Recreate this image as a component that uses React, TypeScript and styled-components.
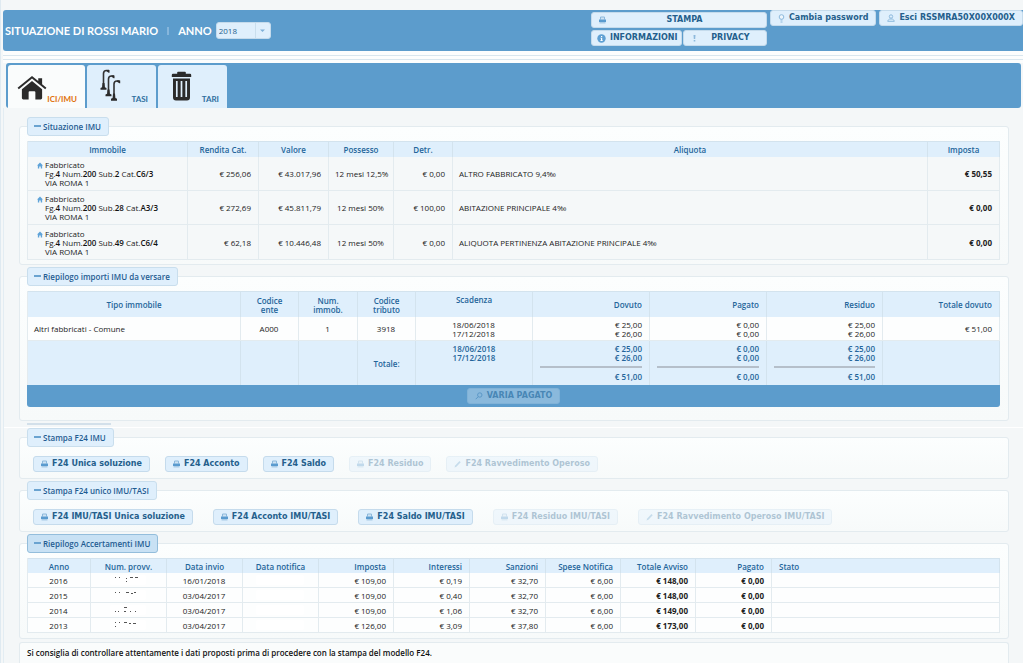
import React from "react";
import styled, { createGlobalStyle } from "styled-components";

const uiFont = '"Open Sans", "Trebuchet MS", sans-serif';
const titleFont = '"Lato", "Trebuchet MS", sans-serif';
const buttonFont = '"DejaVu Sans", Verdana, sans-serif';

const blue = "#5c9ccc";
const pale = "#dfeffc";
const line = "#e3ebef";
const ink = "#2e6e9e";

const Global = createGlobalStyle`
  *, *::before, *::after { box-sizing: border-box; }
  body { margin: 0; background: #ffffff; font-family: ${uiFont}; font-size: 8px; line-height: 9px; color: #222222; }
  b { font-weight: 600; color: #111111; }
  svg { display: block; flex: none; }
`;

const Page = styled.div`
  background: #f4f7f8;
  border-left: 1px solid #dfeaf1;
  padding: 10px 0 0 2px;
`;

const Header = styled.header`
  display: flex;
  align-items: flex-start;
  justify-content: space-between;
  height: 41px;
  background: ${blue};
  border-radius: 3px 0 0 3px;
`;

const TitleBar = styled.div`
  display: flex;
  align-items: center;
  height: 41px;
  padding-left: 2px;
  font-family: ${titleFont};
`;

const Title = styled.h1`
  margin: 0;
  font-size: 11px;
  line-height: 16px;
  font-weight: 700;
  color: #ffffff;
`;

const TitleDivider = styled.span`
  width: 2px;
  height: 8px;
  margin: 0 9px;
  background: #86b6dc;
`;

const YearLabel = styled.label`
  font-size: 11px;
  line-height: 16px;
  font-weight: 700;
  color: #ffffff;
  margin-right: 4px;
`;

const YearBox = styled.div`
  display: grid;
  width: 55px;
  height: 17px;
  background: ${pale};
  border: 1px solid #c5dbec;
  border-radius: 3px;

  & > * { grid-area: 1 / 1; }
  & > svg { justify-self: end; pointer-events: none; }
`;

const YearSelect = styled.select`
  appearance: none;
  width: 100%;
  height: 15px;
  padding: 0 16px 0 2px;
  border: 0;
  background: transparent;
  font-family: ${uiFont};
  font-size: 8px;
  color: #255f8c;
`;

const Actions = styled.div`
  display: flex;
  align-items: flex-start;
  gap: 3px;
`;

const ActionGrid = styled.div`
  display: grid;
  grid-template-columns: 91px 84px;
  gap: 2px 1px;
  padding-top: 2px;
`;

const Button = styled.button<{ $wide?: boolean; $centered?: boolean }>`
  display: flex;
  align-items: center;
  gap: 4px;
  height: 16px;
  padding: 0 7px;
  grid-column: ${(p) => (p.$wide ? "span 2" : "auto")};
  border: 1px solid #c5dbec;
  border-radius: 3px;
  background: ${pale};
  color: #255f8c;
  font-family: ${buttonFont};
  font-size: 8px;
  line-height: 10px;
  font-weight: 700;
  white-space: nowrap;

  & > span { flex: ${(p) => (p.$centered ? "1" : "none")}; text-align: center; }
  &:disabled { opacity: 0.35; }
`;

const InfoButton = styled(Button)`
  padding: 0 0 0 5px;
`;

const Rules = styled.div`
  height: 12px;
  padding-top: 4px;
  background: #fcfdfd;

  &::after { content: ""; display: block; height: 5px; border: solid #d9e6ee; border-width: 1px 0; }
`;

const Tabs = styled.nav`
  display: flex;
  align-items: flex-end;
  gap: 2px;
  height: 45px;
  margin: 0 2px 0 3px;
  padding-left: 2px;
  background: ${blue};
  border-radius: 3px;
`;

const Tab = styled.a<{ $active?: boolean }>`
  display: flex;
  align-items: flex-end;
  justify-content: space-between;
  width: ${(p) => (p.$active ? "77px" : "69px")};
  height: 43px;
  padding: 0 8px 4px ${(p) => (p.$active ? "9px" : "13px")};
  border-radius: 3px 3px 0 0;
  background: ${(p) => (p.$active ? "#fafcfc" : pale)};
  color: ${(p) => (p.$active ? "#e17009" : ink)};
  font-family: ${titleFont};
  font-size: 8px;
  line-height: 10px;
  font-weight: 700;
  text-decoration: none;

  & > svg { margin-bottom: 3px; }
`;

const Content = styled.main`
  border-left: 1px solid #e3edf3;
  padding: 9px 14px 0 15px;
`;

const Section = styled.fieldset<{ $bottom: number }>`
  min-width: 0;
  margin: 0 0 2px;
  padding: 5px 8px ${(p) => p.$bottom}px 7px;
  border: 1px solid ${line};
  border-radius: 3px;
  background: linear-gradient(#fcfefe, #f7fafa);
`;

const Legend = styled.legend<{ $focused?: boolean }>`
  display: flex;
  align-items: center;
  gap: 2px;
  height: 19px;
  padding: 0 7px 1px 6px;
  border: 1px solid ${(p) => (p.$focused ? "#93bddb" : "#c9deed")};
  border-radius: 3px;
  background: ${(p) => (p.$focused ? "#c8e1f4" : pale)};
  color: #1f5c92;
  font-size: 8px;
  font-weight: 600;
`;

const Dash = styled.span`
  width: 7px;
  height: 2px;
  background: #6aa3d0;
`;

const Table = styled.table`
  width: 100%;
  table-layout: fixed;
  border-collapse: separate;
  border-spacing: 0;
  border-left: 1px solid ${line};
  font-size: 8px;
`;

const Th = styled.th<{ $align?: string; $top?: boolean; $h: number }>`
  height: ${(p) => p.$h}px;
  padding: ${(p) => (p.$top ? "3px 7px" : "0 7px")};
  border: solid #d3e3ee;
  border-width: 1px 1px 0 0;
  background: ${pale};
  color: #24659a;
  font-weight: 600;
  text-align: ${(p) => p.$align || "center"};
  vertical-align: ${(p) => (p.$top ? "top" : "middle")};
  white-space: nowrap;
`;

const Td = styled.td<{ $align?: string; $bold?: boolean; $h: number; $white?: boolean }>`
  height: ${(p) => p.$h}px;
  padding: 0 7px 0 6px;
  border: solid ${line};
  border-width: 0 1px 1px 0;
  background: ${(p) => (p.$white ? "#fdfefe" : "#f5f8f9")};
  text-align: ${(p) => p.$align || "left"};
  font-weight: ${(p) => (p.$bold ? 700 : 400)};
  white-space: nowrap;
`;

const TotalTd = styled.td<{ $align?: string; $top?: boolean }>`
  height: 44px;
  padding: ${(p) => (p.$top ? "3px 7px 0" : "0 7px")};
  border-right: 1px solid #d3e3ee;
  background: ${pale};
  color: #24659a;
  font-weight: 600;
  text-align: ${(p) => p.$align || "center"};
  vertical-align: ${(p) => (p.$top ? "top" : "middle")};
`;

const Sum = styled.div`
  margin-top: 4px;
  padding-top: 4px;
  border-top: 2px solid #b5bfca;
`;

const Property = styled.div`
  display: flex;
  gap: 2px;
  padding-left: 3px;

  & > svg { margin-top: 2px; }
`;

const ActionBar = styled.div`
  display: flex;
  align-items: center;
  justify-content: center;
  height: 22px;
  background: ${blue};
  border-radius: 0 0 3px 3px;
`;

const Seam = styled.div`
  height: 5px;
  margin: 0 -14px 0 -15px;
  padding-left: 23px;
  border-bottom: 1px solid #ffffff;

  &::before { content: ""; display: block; width: 84px; height: 2px; background: #d3e0ea; }
`;

const ButtonRow = styled.div<{ $gap: number }>`
  display: flex;
  flex-wrap: wrap;
  gap: ${(p) => p.$gap}px;
  padding: 4px 0 0 6px;
`;

const Blank = styled.span<{ $w: number }>`
  display: block;
  width: ${(p) => p.$w}px;
  height: 10px;
  margin: 0 auto;
  border-radius: 2px;
  background: #ffffff;
`;

const Note = styled.footer`
  margin-top: 3px;
  height: 21px;
  padding: 5px 7px;
  border: solid ${line};
  border-width: 1px 1px 0 1px;
  border-radius: 3px 3px 0 0;
  background: #fafcfc;
  font-size: 8px;
  font-weight: 600;
  color: #111111;
`;

const PrintIcon = () => (
  <svg width="7" height="8" viewBox="0 0 7 8">
    <path d="M1.500 3.500V1h4v2.500" fill="#cfe3f3" stroke="#8db9dc" />
    <path d="M0 3.500h7V6H0z" fill="#5a9bcf" />
    <path d="M.5 6h6v1.500h-6z" fill="#a9cbe6" />
  </svg>
);

const PencilIcon = () => (
  <svg width="7" height="8" viewBox="0 0 7 8">
    <path d="M.5 7.500l.7-1.900L5.500 1l1.200 1.200L2.400 6.700z" fill="#6aa3d0" />
  </svg>
);

const BulbIcon = () => (
  <svg width="7" height="9" viewBox="0 0 7 9" fill="none" stroke="#8db9dc">
    <circle cx="3.500" cy="3" r="2.300" fill="#eef6fc" />
    <path d="M2.500 6h2M2.500 8h2" />
  </svg>
);

const UserIcon = () => (
  <svg width="8" height="8" viewBox="0 0 8 8" fill="none" stroke="#8db9dc">
    <circle cx="4" cy="2.500" r="1.700" />
    <path d="M.7 7.300c.4-1.500 1.300-2 2-2.300h2.600c.7.300 1.600.8 2 2.300z" />
  </svg>
);

const InfoIcon = () => (
  <svg width="9" height="9" viewBox="0 0 9 9">
    <circle cx="4.500" cy="4.500" r="4.200" fill="#5fa0d3" />
    <path d="M4 2h1.200v1H4zM3.500 3.800h1.700v2.500h.6V7H3.300v-.7H4V4.500h-.5z" fill="#fff" />
  </svg>
);

const AlertIcon = () => (
  <svg width="7" height="8" viewBox="0 0 7 8" fill="#8db9dc">
    <path d="M2.500 1h2L4.200 5H2.800zM2.700 6h1.600v1.500H2.700z" />
  </svg>
);

const SearchIcon = () => (
  <svg width="8" height="8" viewBox="0 0 8 8" fill="none" stroke="#5c93be">
    <circle cx="4.800" cy="3" r="2.200" />
    <path d="M3.200 4.700L.7 7.200" />
  </svg>
);

const SmallHouse = () => (
  <svg width="6" height="7" viewBox="0 0 7 7">
    <path d="M3.500 0L7 3.500H6V7H4.400V4.600H2.600V7H1V3.500H0z" fill="#5fa3d8" />
  </svg>
);

const HouseIcon = () => (
  <svg width="30" height="26" viewBox="0 0 31 27" fill="#2b2b2b">
    <path d="M15.500 1L22 6.300V3.500h4v6.100l4.500 3.700-1.300 1.500-13.700-11.200L1.800 14.800.5 13.300z" />
    <path d="M15.500 6.200L26 14.700V24a1.500 1.500 0 0 1-1.500 1.500H19V18a1 1 0 0 0-1-1h-5a1 1 0 0 0-1 1v7.500H6.500A1.500 1.500 0 0 1 5 24v-9.300z" />
  </svg>
);

const LampsIcon = () => (
  <svg width="21" height="32" viewBox="0 0 21 32">
    <g fill="none" stroke="#333333" strokeWidth="1.600">
      <path d="M3.500 20V4.500a3 3 0 0 1 3-3H9" />
      <path d="M8.500 27V10a3 3 0 0 1 3-3H14" />
      <path d="M14 31V15a3 3 0 0 1 3-3h2.500" />
    </g>
    <g fill="#2b2b2b">
      <path d="M6.500 1h3v2.700H8.700L6.500 2.300zM11.500 6.500h3v2.700h-.8l-2.200-1.400zM17 11.500h3.200v2.700h-.8L17 12.800z" />
      <path d="M2.500 14h2l.4 4.200 1.600.8v1.800h-6V19l1.600-.8zM7.500 20.500h2l.4 4.200 1.600.8v1.800h-6v-1.800l1.600-.8zM13 24.500h2l.4 4.500 1.600.8v1.900h-6v-1.900l1.600-.8z" />
    </g>
  </svg>
);

const BinIcon = () => (
  <svg width="21" height="30" viewBox="0 0 21 30">
    <path d="M7 .8h7a.8.800 0 0 1 .8.800v1.200H19a1.200 1.200 0 0 1 1.200 1.200v2H.8V4A1.200 1.200 0 0 1 2 2.800h4.200V1.600A.8.800 0 0 1 7 .8z" fill="#2b2b2b" />
    <path d="M2 7.500h17v19a3 3 0 0 1-3 3H5a3 3 0 0 1-3-3z" fill="#2b2b2b" />
    <path d="M5.800 10v16M10.500 10v16M15.200 10v16" stroke="#dfeffc" strokeWidth="1.700" />
  </svg>
);

const Arrow = () => (
  <svg width="15" height="15" viewBox="0 0 15 15">
    <path d="M.5 0v15" stroke="#c9deed" />
    <path d="M5 6.500h5L7.500 9z" fill="#7fb0d8" />
  </svg>
);

/* Remains of the masked notice numbers: only scattered dots are left visible. */
const MaskedNumber = ({ dots }: { dots: string }) => (
  <Blank $w={36}>
    <svg width="36" height="10" viewBox="0 0 36 10">
      <path d={dots} stroke="#555555" strokeWidth="1" />
    </svg>
  </Blank>
);

const Cols = ({ widths }: { widths: (number | null)[] }) => (
  <colgroup>
    {widths.map((w, i) => (
      <col key={i} width={w === null ? undefined : w} />
    ))}
  </colgroup>
);

const buildings = [
  { sub: "2", cat: "C6/3", rendita: "256,06", valore: "43.017,96", possesso: "12 mesi 12,5%", detr: "0,00", aliquota: "ALTRO FABBRICATO 9,4‰", imposta: "50,55" },
  { sub: "28", cat: "A3/3", rendita: "272,69", valore: "45.811,79", possesso: "12 mesi 50%", detr: "100,00", aliquota: "ABITAZIONE PRINCIPALE 4‰", imposta: "0,00" },
  { sub: "49", cat: "C6/4", rendita: "62,18", valore: "10.446,48", possesso: "12 mesi 50%", detr: "0,00", aliquota: "ALIQUOTA PERTINENZA ABITAZIONE PRINCIPALE 4‰", imposta: "0,00" },
];

const notices = [
  { anno: "2016", invio: "16/01/2018", v: ["109,00", "0,19", "32,70", "6,00"], tot: "148,00", dots: "M5 2.500h1M9 2.500h1M16 3.500h1M16 6.500h1M20 2.500h3M25 2.500h3" },
  { anno: "2015", invio: "03/04/2017", v: ["109,00", "0,40", "32,70", "6,00"], tot: "148,00", dots: "M5 2.500h1M9 2.500h1M16 2.500h3M21 3.500h2M24 2.500h2" },
  { anno: "2014", invio: "03/04/2017", v: ["109,00", "1,06", "32,70", "6,00"], tot: "149,00", dots: "M5 6.500h1M8 6.500h1M14 2.500h3M14 6.500h2M20 6.500h1M25 6.500h1" },
  { anno: "2013", invio: "03/04/2017", v: ["126,00", "3,09", "37,80", "6,00"], tot: "173,00", dots: "M5 2.500h1M5 6.500h1M9 2.500h1M14 2.500h3M19 3.500h2M23 3.500h3" },
];

const amounts = [
  ["25,00", "26,00", "51,00"],
  ["0,00", "0,00", "0,00"],
  ["25,00", "26,00", "51,00"],
];

const singleForms = ["F24 Unica soluzione", "F24 Acconto", "F24 Saldo", "F24 Residuo", "F24 Ravvedimento Operoso"];
const jointForms = ["F24 IMU/TASI Unica soluzione", "F24 Acconto IMU/TASI", "F24 Saldo IMU/TASI", "F24 Residuo IMU/TASI", "F24 Ravvedimento Operoso IMU/TASI"];

const FormButtons = ({ labels, gap }: { labels: string[]; gap: number }) => (
  <ButtonRow $gap={gap}>
    {labels.map((label, i) => (
      <Button key={label} type="button" disabled={i > 2}>
        {i === 4 ? <PencilIcon /> : <PrintIcon />}
        <span>{label}</span>
      </Button>
    ))}
  </ButtonRow>
);

export default function App() {
  return (
    <Page>
      <Global />
      <Header>
        <TitleBar>
          <Title>SITUAZIONE DI ROSSI MARIO</Title>
          <TitleDivider />
          <YearLabel htmlFor="anno">ANNO</YearLabel>
          <YearBox>
            <YearSelect id="anno" defaultValue="2018">
              <option>2018</option>
            </YearSelect>
            <Arrow />
          </YearBox>
        </TitleBar>
        <Actions>
          <ActionGrid>
            <Button type="button" $wide $centered><PrintIcon /><span>STAMPA</span></Button>
            <InfoButton type="button"><InfoIcon /><span>INFORMAZIONI</span></InfoButton>
            <Button type="button" $centered><AlertIcon /><span>PRIVACY</span></Button>
          </ActionGrid>
          <Button type="button"><BulbIcon /><span>Cambia password</span></Button>
          <Button type="button"><UserIcon /><span>Esci RSSMRA50X00X000X</span></Button>
        </Actions>
      </Header>
      <Rules />
      <Tabs>
        <Tab href="#imu" $active><HouseIcon />ICI/IMU</Tab>
        <Tab href="#tasi"><LampsIcon />TASI</Tab>
        <Tab href="#tari"><BinIcon />TARI</Tab>
      </Tabs>
      <Content>
        <Section $bottom={4}>
          <Legend><Dash />Situazione IMU</Legend>
          <Table>
            <Cols widths={[160, 71, 70, 65, 59, null, 72]} />
            <thead>
              <tr>
                {["Immobile", "Rendita Cat.", "Valore", "Possesso", "Detr.", "Aliquota", "Imposta"].map((h) => (
                  <Th key={h} $h={16}>{h}</Th>
                ))}
              </tr>
            </thead>
            <tbody>
              {buildings.map((b, i) => (
                <tr key={b.sub}>
                  <Td $h={i === 2 ? 35 : 34}>
                    <Property>
                      <SmallHouse />
                      <div>
                        Fabbricato<br />
                        Fg.<b>4</b> Num.<b>200</b> Sub.<b>{b.sub}</b> Cat.<b>{b.cat}</b><br />
                        VIA ROMA 1
                      </div>
                    </Property>
                  </Td>
                  <Td $h={34} $align="right">€ {b.rendita}</Td>
                  <Td $h={34} $align="right">€ {b.valore}</Td>
                  <Td $h={34} $align="center">{b.possesso}</Td>
                  <Td $h={34} $align="right">€ {b.detr}</Td>
                  <Td $h={34}>{b.aliquota}</Td>
                  <Td $h={34} $align="right" $bold>€ {b.imposta}</Td>
                </tr>
              ))}
            </tbody>
          </Table>
        </Section>

        <Section $bottom={13}>
          <Legend><Dash />Riepilogo importi IMU da versare</Legend>
          <Table>
            <Cols widths={[null, 58, 59, 58, 117, 117, 117, 116, 117]} />
            <thead>
              <tr>
                <Th $h={26}>Tipo immobile</Th>
                <Th $h={26}>Codice<br />ente</Th>
                <Th $h={26}>Num.<br />immob.</Th>
                <Th $h={26}>Codice<br />tributo</Th>
                <Th $h={26} $top>Scadenza</Th>
                <Th $h={26} $align="right">Dovuto</Th>
                <Th $h={26} $align="right">Pagato</Th>
                <Th $h={26} $align="right">Residuo</Th>
                <Th $h={26} $align="right">Totale dovuto</Th>
              </tr>
            </thead>
            <tbody>
              <tr>
                <Td $h={24} $white>Altri fabbricati - Comune</Td>
                <Td $h={24} $white $align="center">A000</Td>
                <Td $h={24} $white $align="center">1</Td>
                <Td $h={24} $white $align="center">3918</Td>
                <Td $h={24} $white $align="center">18/06/2018<br />17/12/2018</Td>
                {amounts.map((a, i) => (
                  <Td key={i} $h={24} $white $align="right">€ {a[0]}<br />€ {a[1]}</Td>
                ))}
                <Td $h={24} $white $align="right">€ 51,00</Td>
              </tr>
              <tr>
                <TotalTd />
                <TotalTd />
                <TotalTd />
                <TotalTd>Totale:</TotalTd>
                <TotalTd $top>18/06/2018<br />17/12/2018</TotalTd>
                {amounts.map((a, i) => (
                  <TotalTd key={i} $top $align="right">
                    € {a[0]}<br />€ {a[1]}
                    <Sum>€ {a[2]}</Sum>
                  </TotalTd>
                ))}
                <TotalTd />
              </tr>
            </tbody>
          </Table>
          <ActionBar>
            <Button type="button" disabled><SearchIcon /><span>VARIA PAGATO</span></Button>
          </ActionBar>
        </Section>

        <Seam />

        <Section $bottom={6}>
          <Legend><Dash />Stampa F24 IMU</Legend>
          <FormButtons labels={singleForms} gap={15} />
        </Section>

        <Section $bottom={6}>
          <Legend><Dash />Stampa F24 unico IMU/TASI</Legend>
          <FormButtons labels={jointForms} gap={20} />
        </Section>

        <Section $bottom={5}>
          <Legend $focused><Dash />Riepilogo Accertamenti IMU</Legend>
          <Table>
            <Cols widths={[63, 76, 76, 76, 75, 76, 76, 75, 75, 76, null]} />
            <thead>
              <tr>
                {["Anno", "Num. provv.", "Data invio", "Data notifica"].map((h) => (
                  <Th key={h} $h={15}>{h}</Th>
                ))}
                {["Imposta", "Interessi", "Sanzioni", "Spese Notifica", "Totale Avviso", "Pagato"].map((h) => (
                  <Th key={h} $h={15} $align="right">{h}</Th>
                ))}
                <Th $h={15} $align="left">Stato</Th>
              </tr>
            </thead>
            <tbody>
              {notices.map((n) => (
                <tr key={n.anno}>
                  <Td $h={15} $white $align="center">{n.anno}</Td>
                  <Td $h={15} $white><MaskedNumber dots={n.dots} /></Td>
                  <Td $h={15} $white $align="center">{n.invio}</Td>
                  <Td $h={15} $white><Blank $w={48} /></Td>
                  {n.v.map((v, i) => (
                    <Td key={i} $h={15} $white $align="right">€ {v}</Td>
                  ))}
                  <Td $h={15} $white $align="right" $bold>€ {n.tot}</Td>
                  <Td $h={15} $white $align="right" $bold>€ 0,00</Td>
                  <Td $h={15} $white />
                </tr>
              ))}
            </tbody>
          </Table>
        </Section>

        <Note>Si consiglia di controllare attentamente i dati proposti prima di procedere con la stampa del modello F24.</Note>
      </Content>
    </Page>
  );
}
